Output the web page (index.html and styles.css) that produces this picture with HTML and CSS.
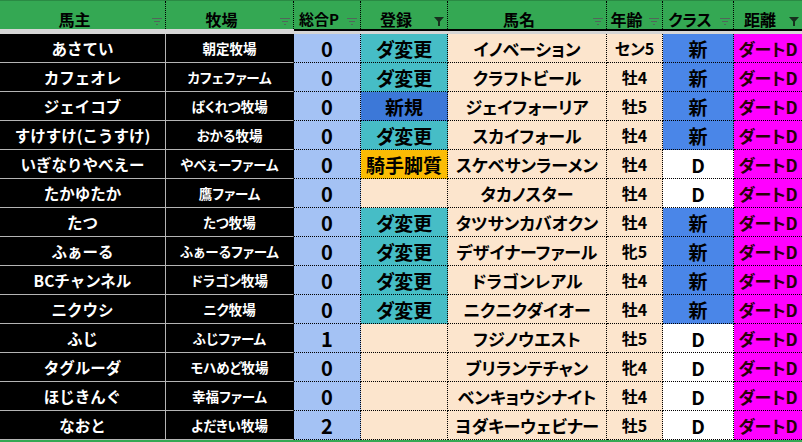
FILE: index.html
```html
<!DOCTYPE html>
<html>
<head>
  <meta charset="utf-8">
  <title>登録一覧</title>
  <link rel="stylesheet" href="styles.css">
</head>
<body>
  <div class="sheet">
    <div class="row head">
      <div class="hc"><span class="lbl">馬主</span><svg class="flt" viewBox="0 0 10 7"><path d="M0 0.5H10M2 3.5H8M4 6.5H6"/></svg></div>
      <div class="hc"><span class="lbl">牧場</span><svg class="flt" viewBox="0 0 10 7"><path d="M0 0.5H10M2 3.5H8M4 6.5H6"/></svg></div>
      <div class="hc"><span class="lbl small">総合P</span><svg class="flt" viewBox="0 0 10 7"><path d="M0 0.5H10M2 3.5H8M4 6.5H6"/></svg></div>
      <div class="hc"><span class="lbl">登録</span><svg class="flt on" viewBox="0 0 10 9"><path d="M0 0H10L6 4.5V9H4V4.5Z"/></svg></div>
      <div class="hc"><span class="lbl">馬名</span><svg class="flt" viewBox="0 0 10 7"><path d="M0 0.5H10M2 3.5H8M4 6.5H6"/></svg></div>
      <div class="hc"><span class="lbl">年齢</span><svg class="flt" viewBox="0 0 10 7"><path d="M0 0.5H10M2 3.5H8M4 6.5H6"/></svg></div>
      <div class="hc"><span class="lbl">クラス</span><svg class="flt" viewBox="0 0 10 7"><path d="M0 0.5H10M2 3.5H8M4 6.5H6"/></svg></div>
      <div class="hc"><span class="lbl">距離</span><svg class="flt on" viewBox="0 0 10 9"><path d="M0 0H10L6 4.5V9H4V4.5Z"/></svg></div>
    </div>
    <div class="divider"><div class="dl"></div><div class="dr"></div></div>

    <div class="row">
      <div class="c owner">あさてい</div><div class="c farm">朝定牧場</div><div class="c pt">0</div>
      <div class="c reg dirt">ダ変更</div><div class="c name">イノベーション</div><div class="c age">セン5</div>
      <div class="c cls new">新</div><div class="c dist">ダートD</div>
    </div>
    <div class="row">
      <div class="c owner">カフェオレ</div><div class="c farm">カフェファーム</div><div class="c pt">0</div>
      <div class="c reg dirt">ダ変更</div><div class="c name">クラフトビール</div><div class="c age">牡4</div>
      <div class="c cls new">新</div><div class="c dist">ダートD</div>
    </div>
    <div class="row">
      <div class="c owner">ジェイコブ</div><div class="c farm">ばくれつ牧場</div><div class="c pt">0</div>
      <div class="c reg fresh">新規</div><div class="c name">ジェイフォーリア</div><div class="c age">牡5</div>
      <div class="c cls new">新</div><div class="c dist">ダートD</div>
    </div>
    <div class="row">
      <div class="c owner">すけすけ(こうすけ)</div><div class="c farm">おかる牧場</div><div class="c pt">0</div>
      <div class="c reg dirt">ダ変更</div><div class="c name">スカイフォール</div><div class="c age">牡4</div>
      <div class="c cls new">新</div><div class="c dist">ダートD</div>
    </div>
    <div class="row">
      <div class="c owner">いぎなりやべえー</div><div class="c farm">やべぇーファーム</div><div class="c pt">0</div>
      <div class="c reg jockey">騎手脚質</div><div class="c name">スケベサンラーメン</div><div class="c age">牡4</div>
      <div class="c cls">D</div><div class="c dist">ダートD</div>
    </div>
    <div class="row">
      <div class="c owner">たかゆたか</div><div class="c farm">鷹ファーム</div><div class="c pt">0</div>
      <div class="c reg"></div><div class="c name">タカノスター</div><div class="c age">牡4</div>
      <div class="c cls">D</div><div class="c dist">ダートD</div>
    </div>
    <div class="row">
      <div class="c owner">たつ</div><div class="c farm">たつ牧場</div><div class="c pt">0</div>
      <div class="c reg dirt">ダ変更</div><div class="c name">タツサンカバオクン</div><div class="c age">牡4</div>
      <div class="c cls new">新</div><div class="c dist">ダートD</div>
    </div>
    <div class="row">
      <div class="c owner">ふぁーる</div><div class="c farm">ふぁーるファーム</div><div class="c pt">0</div>
      <div class="c reg dirt">ダ変更</div><div class="c name">デザイナーファール</div><div class="c age">牝5</div>
      <div class="c cls new">新</div><div class="c dist">ダートD</div>
    </div>
    <div class="row">
      <div class="c owner">BCチャンネル</div><div class="c farm">ドラゴン牧場</div><div class="c pt">0</div>
      <div class="c reg dirt">ダ変更</div><div class="c name">ドラゴンレアル</div><div class="c age">牡4</div>
      <div class="c cls new">新</div><div class="c dist">ダートD</div>
    </div>
    <div class="row">
      <div class="c owner">ニクウシ</div><div class="c farm">ニク牧場</div><div class="c pt">0</div>
      <div class="c reg dirt">ダ変更</div><div class="c name">ニクニクダイオー</div><div class="c age">牡4</div>
      <div class="c cls new">新</div><div class="c dist">ダートD</div>
    </div>
    <div class="row">
      <div class="c owner">ふじ</div><div class="c farm">ふじファーム</div><div class="c pt">1</div>
      <div class="c reg"></div><div class="c name">フジノウエスト</div><div class="c age">牡5</div>
      <div class="c cls">D</div><div class="c dist">ダートD</div>
    </div>
    <div class="row">
      <div class="c owner">タグルーダ</div><div class="c farm">モハめど牧場</div><div class="c pt">0</div>
      <div class="c reg"></div><div class="c name">ブリランテチャン</div><div class="c age">牝4</div>
      <div class="c cls">D</div><div class="c dist">ダートD</div>
    </div>
    <div class="row">
      <div class="c owner">ほじきんぐ</div><div class="c farm">幸福ファーム</div><div class="c pt">0</div>
      <div class="c reg"></div><div class="c name">ベンキョウシナイト</div><div class="c age">牡4</div>
      <div class="c cls">D</div><div class="c dist">ダートD</div>
    </div>
    <div class="row">
      <div class="c owner">なおと</div><div class="c farm">よだきい牧場</div><div class="c pt">2</div>
      <div class="c reg"></div><div class="c name">ヨダキーウェビナー</div><div class="c age">牡5</div>
      <div class="c cls">D</div><div class="c dist">ダートD</div>
    </div>

    <div class="foot"></div>
  </div>
</body>
</html>
```

FILE: styles.css
```css
body {
    margin: 0;
    background-color: #fff;
    font-family: "Noto Sans CJK JP", "Noto Sans", sans-serif;
    font-weight: 700;
    font-feature-settings: "palt";
    color: #000;
}

.sheet {
    width: 802px;
}

.row {
    display: grid;
    grid-template-columns: 166px 128px 67px 87px 159px 56px 71px 68px;
    height: 29px;
}

/* header */
.head {
    background-color: #34a853;
    border-top: 1px solid #2a8a44;
    box-sizing: border-box;
}
.hc {
    display: flex;
    align-items: center;
    padding-top: 7px;
    border-right: 1px dotted #000;
    min-width: 0;
}
.hc:last-child {
    border-right: none;
}
.lbl {
    flex: 1;
    text-align: center;
    font-size: 16px;
    line-height: 16px;
}
.lbl.small {
    font-size: 15px;
}
.flt {
    width: 10px;
    height: 7px;
    margin: 0 3px;
    align-self: flex-end;
    margin-bottom: 4px;
    flex: none;
}
.flt path {
    stroke: #51665a;
    stroke-width: 1;
    fill: none;
}
.flt.on {
    height: 9px;
    margin-bottom: 3px;
}
.flt.on path {
    stroke: none;
    fill: #17301e;
}

.divider {
    display: grid;
    grid-template-columns: 294px 508px;
    height: 5px;
}
.dl {
    background-color: #d6d6d6;
}
.dr {
    background-color: #d6d6d6;
    border-top: 2px solid #000;
}

/* data cells */
.c {
    display: flex;
    align-items: center;
    justify-content: safe center;
    overflow: hidden;
    white-space: nowrap;
    padding: 0 3px;
    border-right: 1px dotted #000;
    border-bottom: 1px dotted #000;
    min-width: 0;
}
.owner {
    background-color: #000;
    color: #fff;
    font-size: 15.5px;
    font-feature-settings: normal;
    border-right: 1px solid #b4b4b4;
    border-bottom: 1px solid #b4b4b4;
}
.farm {
    background-color: #000;
    color: #fff;
    font-size: 13.5px;
    border-right: 1px solid #000;
    border-bottom: 1px solid #b4b4b4;
}
.pt {
    background-color: #a4c2f4;
    font-size: 20px;
}
.reg {
    background-color: #fce5cd;
    font-size: 19px;
}
.reg.dirt {
    background-color: #46bdc6;
}
.reg.fresh {
    background-color: #3c78d8;
}
.reg.jockey {
    background-color: #fbbc04;
}
.name {
    background-color: #fce5cd;
    font-size: 17px;
}
.age {
    background-color: #fce5cd;
    font-size: 16px;
}
.cls {
    background-color: #fff;
    font-size: 19px;
}
.cls.new {
    background-color: #4a86e8;
}
.dist {
    background-color: #ff00ff;
    color: #2a0008;
    font-size: 17px;
    border-right: none;
}

.foot {
    height: 2px;
    background-color: #34a853;
}
```
